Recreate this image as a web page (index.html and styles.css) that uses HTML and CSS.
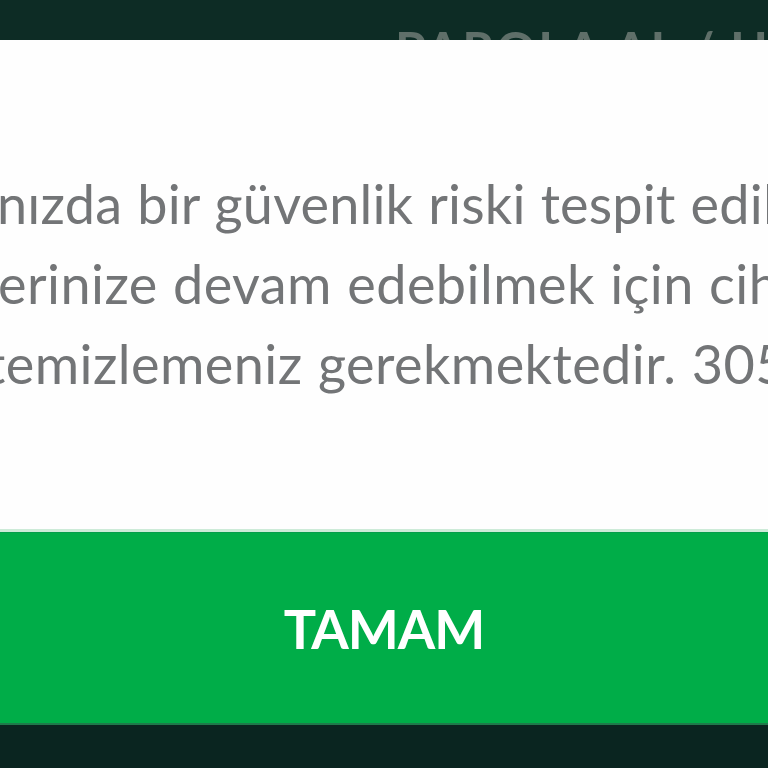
FILE: index.html
```html
<!DOCTYPE html>
<html lang="tr">
<head>
<meta charset="utf-8">
<link rel="stylesheet" href="styles.css">
</head>
<body>
<div class="screen">
  <div class="topbar">
    <div class="bg-title">PAROLA AL / UNUTTUM</div>
  </div>
  <div class="modal">
    <div class="message">
      <div class="line l1">nızda bir güvenlik riski tespit edildi.</div>
      <div class="line l2">erinize devam edebilmek için cihazınızı</div>
      <div class="line l3">temizlemeniz gerekmektedir. 305</div>
    </div>
    <div class="divider"></div>
    <div class="button">TAMAM</div>
  </div>
  <div class="bottombar"></div>
</div>
</body>
</html>
```

FILE: styles.css
```css
html, body {
  margin: 0;
  padding: 0;
}
body {
  width: 768px;
  height: 768px;
  overflow: hidden;
  background: #0b2821;
  font-family: Lato, "Noto Sans", sans-serif;
}
.screen {
  width: 768px;
  height: 768px;
  display: flex;
  flex-direction: column;
  overflow: hidden;
}
.topbar {
  height: 40px;
  flex: none;
  background: #0d2c25;
  overflow: hidden;
  position: relative;
}
.bg-title {
  position: absolute;
  left: 395px;
  top: 24px;
  font-size: 50px;
  font-weight: 700;
  color: #5f6f69;
  white-space: nowrap;
  letter-spacing: 2px;
  line-height: 1;
}
.modal {
  flex: none;
  display: flex;
  flex-direction: column;
  background: #fefefe;
  box-shadow: 0 -1px 0 #cfd6d3;
}
.message {
  height: 489px;
  display: flex;
  flex-direction: column;
  padding-top: 124px;
  box-sizing: border-box;
  overflow: hidden;
}
.line {
  font-size: 54px;
  line-height: 80px;
  color: #737577;
  white-space: nowrap;
  height: 80px;
  letter-spacing: 0.45px;
  word-spacing: 1px;
  flex: none;
}
.l1 { margin-left: -3px; letter-spacing: 0.2px; }
.l2 { margin-left: -2px; }
.l3 { margin-left: -14px; }
.divider {
  height: 3px;
  background: #cdebd8;
  border-bottom: 1px solid #049e4a;
}
.button {
  height: 190px;
  background: #00ad48;
  color: #ffffff;
  font-size: 54px;
  font-weight: 700;
  letter-spacing: -1px;
  display: flex;
  align-items: center;
  justify-content: center;
  border-bottom: 2px solid #1f7a4a;
}
.bottombar {
  flex: 1;
  background: #0a2520;
}
```
